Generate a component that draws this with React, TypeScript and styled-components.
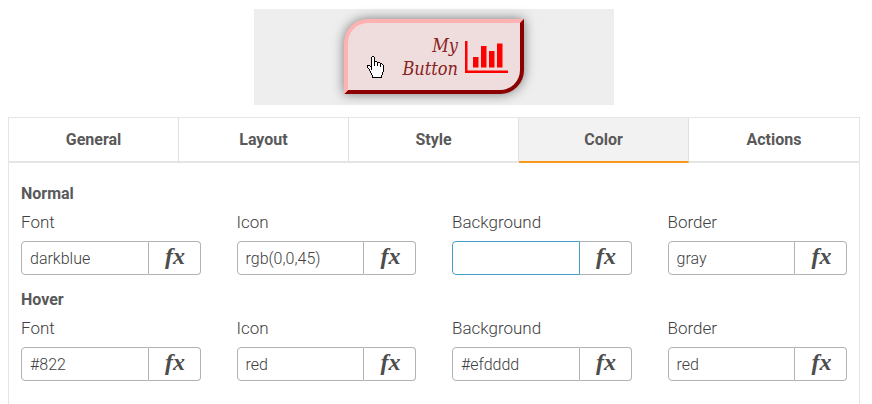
import React, { useState } from "react";
import styled, { createGlobalStyle } from "styled-components";

const GlobalStyle = createGlobalStyle`
  *, *::before, *::after { box-sizing: border-box; }
  body {
    margin: 0;
    background: #fff;
    color: #595959;
    font-family: Roboto, "Liberation Sans", sans-serif;
    font-size: 16px;
  }
`;

const Page = styled.div`
  display: flex;
  flex-direction: column;
  height: 100vh;
  overflow: hidden;
  padding: 9px 12px 0 8px;
`;

const Preview = styled.div`
  display: flex;
  flex: none;
  justify-content: center;
  align-self: center;
  width: 360px;
  max-width: 100%;
  padding: 10px 0 11px;
  margin-bottom: 12px;
  background: #eeeeee;
`;

const PreviewButton = styled.button`
  position: relative;
  display: flex;
  align-items: center;
  justify-content: flex-end;
  gap: 7px;
  width: 180px;
  height: 75px;
  padding: 0 12px 0 0;
  border: 4px solid;
  border-color: #ffb2b2 #8b0000 #8b0000 #ffb2b2;
  border-radius: 24px 0;
  background: #efdddd;
  box-shadow: 0 0 12px rgba(0, 0, 0, 0.5);
  color: #882222;
  font: italic 18px/23px "DejaVu Serif Condensed", "DejaVu Serif", serif;
  text-align: right;
`;

const ButtonText = styled.span`
  width: 64px;
`;

const Cursor = styled.svg`
  position: absolute;
  left: 19px;
  top: 33px;
`;

const Panel = styled.main`
  flex: 1 0 auto;
  border: 1px solid #e5e5e5;
  border-bottom: 0;
`;

const TabBar = styled.div`
  display: grid;
  grid-template-columns: repeat(5, 1fr);
`;

const Tab = styled.button<{ $active: boolean }>`
  height: 45px;
  padding: 0;
  border: 0;
  border-right: 1px solid #e0e0e0;
  border-bottom: 2px solid ${(p) => (p.$active ? "#f8981d" : "#e5e5e5")};
  background: ${(p) => (p.$active ? "#f2f2f2" : "#fff")};
  color: inherit;
  font: inherit;
  font-weight: 700;

  &:last-child {
    border-right: 0;
  }
`;

const Content = styled.div`
  padding: 20px 12px;
`;

const Section = styled.section`
  margin-bottom: 14px;
`;

const Heading = styled.h2`
  margin: 0;
  font-size: 16px;
  line-height: 22px;
`;

const Fields = styled.div`
  display: grid;
  grid-template-columns: repeat(4, minmax(0, 1fr));
  gap: 36px;
`;

const Label = styled.label`
  display: block;
  padding: 3px 0 5px;
  color: #404040;
  font-size: 17px;
  font-weight: 300;
  line-height: 28px;
`;

const InputGroup = styled.div`
  display: flex;
  height: 34px;
`;

const TextInput = styled.input<{ $focused: boolean }>`
  flex: 1;
  min-width: 0;
  padding: 0 8px;
  border: 1px solid ${(p) => (p.$focused ? "#4a9fca" : "#b3b3b3")};
  border-radius: 4px 0 0 4px;
  outline: 0;
  background: #fff;
  color: #404040;
  font: inherit;
  font-weight: 300;
`;

const FxButton = styled.button`
  width: 52px;
  padding: 0 0 4px 2px;
  border: 1px solid #b3b3b3;
  border-left: 0;
  border-radius: 0 4px 4px 0;
  background: #fff;
  color: #4d4d4d;
  font: italic bold 24px/28px "Liberation Serif", serif;
`;

const hand = [
  ".....##..........",
  "....#WW#.........",
  "....#WW#.........",
  "....#WW#.........",
  "....#WW#.........",
  "....#WW###.......",
  "....#WW#WW###....",
  "....#WW#WW#WW##..",
  "....#WW#WW#WW#W#.",
  "###.#WW#WW#WW#WW#",
  "#WW##WWWWWWWW#WW#",
  "#WWW#WWWWWWWWWWW#",
  ".#WW#WWWWWWWWWWW#",
  "..#W#WWWWWWWWWWW#",
  "..#WWWWWWWWWWWWW#",
  "...#WWWWWWWWWWWW#",
  "...#WWWWWWWWWWW#.",
  "....#WWWWWWWWWW#.",
  "....#WWWWWWWWWW#.",
  ".....#WWWWWWWW#..",
  ".....#WWWWWWWW#..",
  ".....##########..",
];

const cells = (mark: string) =>
  hand
    .flatMap((row, y) => [...row].map((c, x) => (c === mark ? `M${x} ${y}h1v1h-1z` : "")))
    .join("");

const HandCursor = () => (
  <Cursor width="17" height="22" viewBox="0 0 17 22" shapeRendering="crispEdges" aria-hidden="true">
    <path fill="#fff" d={cells("W")} />
    <path fill="#000" d={cells("#")} />
  </Cursor>
);

const ChartIcon = () => (
  <svg width="43" height="32" viewBox="0 0 43 32" fill="#f00" aria-hidden="true">
    <path d="M0 0h2.500v29.500H43V32H0z" />
    <path d="M8 16h5.500v10.500H8zM16 5h5.500v21.500H16zM24 10h5.500v16.500H24zM32 2.500h5.500v24H32z" />
  </svg>
);

const tabs = ["General", "Layout", "Style", "Color", "Actions"];

const sections = [
  {
    title: "Normal",
    fields: [
      ["Font", "darkblue"],
      ["Icon", "rgb(0,0,45)"],
      ["Background", ""],
      ["Border", "gray"],
    ],
  },
  {
    title: "Hover",
    fields: [
      ["Font", "#822"],
      ["Icon", "red"],
      ["Background", "#efdddd"],
      ["Border", "red"],
    ],
  },
];

export default function App() {
  const [active, setActive] = useState("Color");
  const [focused, setFocused] = useState("Normal-Background");

  return (
    <>
      <GlobalStyle />
      <Page>
        <Preview>
          <PreviewButton type="button">
            <ButtonText>My Button</ButtonText>
            <ChartIcon />
            <HandCursor />
          </PreviewButton>
        </Preview>
        <Panel>
          <TabBar role="tablist">
            {tabs.map((tab) => (
              <Tab
                key={tab}
                type="button"
                role="tab"
                aria-selected={tab === active}
                $active={tab === active}
                onClick={() => setActive(tab)}
              >
                {tab}
              </Tab>
            ))}
          </TabBar>
          <Content>
            {sections.map(({ title, fields }) => (
              <Section key={title}>
                <Heading>{title}</Heading>
                <Fields>
                  {fields.map(([label, value]) => {
                    const id = `${title}-${label}`;
                    return (
                      <div key={id}>
                        <Label htmlFor={id}>{label}</Label>
                        <InputGroup>
                          <TextInput
                            id={id}
                            type="text"
                            defaultValue={value}
                            $focused={focused === id}
                            onFocus={() => setFocused(id)}
                          />
                          <FxButton type="button">fx</FxButton>
                        </InputGroup>
                      </div>
                    );
                  })}
                </Fields>
              </Section>
            ))}
          </Content>
        </Panel>
      </Page>
    </>
  );
}
